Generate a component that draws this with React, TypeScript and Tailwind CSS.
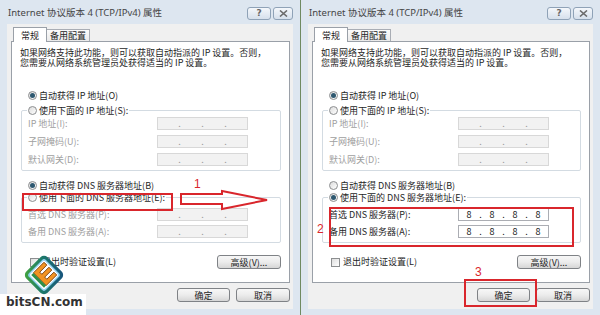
import React from 'react';

// 常规 tab of the IPv4 properties dialog, shown twice: before and after
const CJK = "font-['Noto_Sans_CJK_SC',sans-serif]";

const Radio = ({ checked }: { checked?: boolean }) => (
  <span className="w-[9px] h-[9px] rounded-full border border-[#8c8e90] bg-gradient-to-br from-[#dcdcdc] to-white flex items-center justify-center shrink-0">
    {checked && <span className="w-[5px] h-[5px] rounded-full bg-[#2e5870]" />}
  </span>
);

const IpBox = ({ value, disabled }: { value?: string[]; disabled?: boolean }) => (
  <div className={`w-[91px] h-[13px] border flex items-center text-[9px] leading-none ${disabled ? 'bg-[#f2f2f2] border-[#d8d8d8] text-[#9a9a9a]' : 'bg-white border-[#abadb3] text-[#222]'}`}>
    {[0, 1, 2, 3].map((i) => (
      <React.Fragment key={i}>
        <span className="flex-1 text-center">{value ? value[i] : ''}</span>
        {i < 3 && <span className="w-[3px] text-center">.</span>}
      </React.Fragment>
    ))}
  </div>
);

const FieldRow = ({ label, value, disabled }: { label: string; value?: string[]; disabled?: boolean }) => (
  <div className="flex items-center h-[13px]">
    <span className={`w-[135px] pl-[6px] text-[9px] leading-none ${disabled ? 'text-[#a0a0a0]' : 'text-[#1e1e1e]'}`}>{label}</span>
    <IpBox value={value} disabled={disabled} />
  </div>
);

const Btn = ({ children, w }: { children: React.ReactNode; w: string }) => (
  <div className={`${w} h-[14px] rounded-[3px] border border-[#7f8286] bg-gradient-to-b from-[#f7f7f7] via-[#ececec] to-[#d6d6d6] flex items-center justify-center text-[9px] leading-none text-[#1e1e1e]`}>
    {children}
  </div>
);

const Dialog = ({ after, width }: { after?: boolean; width: string }) => {
  const dns = after ? ['8', '8', '8', '8'] : undefined;
  return (
    <div className={`${width} h-[315px] bg-[#dde6f0] flex flex-col shrink-0 ${CJK}`}>
      {/* title bar */}
      <div className="h-[24px] flex items-start justify-between pl-[8px] pr-[7px]">
        <span className="mt-[8px] text-[9.5px] leading-none text-[#454545] font-['Noto_Sans','Noto_Sans_CJK_SC',sans-serif]">Internet 协议版本 4 (TCP/IPv4) 属性</span>
        <div className="mt-[7px] flex gap-[2px]">
          <div className="w-[24px] h-[13px] rounded-[3px] border border-[#8fa2b7] bg-gradient-to-b from-[#f4f7fb] to-[#d6e0ec] flex items-center justify-center text-[9px] leading-none font-bold text-[#666] font-['DejaVu_Sans',sans-serif]">?</div>
          <div className="w-[20px] h-[13px] rounded-[3px] border border-[#8fa2b7] bg-gradient-to-b from-[#f4f7fb] to-[#d6e0ec] flex items-center justify-center">
            <svg width="9" height="7" viewBox="0 0 9 7">
              <path d="M1 0.5 L8 6.5 M8 0.5 L1 6.5" stroke="#6b6b6b" strokeWidth="1.6" />
            </svg>
          </div>
        </div>
      </div>
      {/* client */}
      <div className="flex-1 mx-[7px] mb-[6px] bg-[#f0f0f0] flex flex-col pt-[3px] pl-[4px] pr-[3px]">
        <div className="h-[14px] flex items-end pl-[2px] text-[9px] leading-none">
          <div className="w-[34px] h-[15px] -mb-[1px] bg-white border border-b-0 border-[#9aa0a8] flex items-center justify-center text-[#1e1e1e] relative z-10">常规</div>
          <div className="w-[43px] h-[12px] bg-gradient-to-b from-[#fbfbfb] to-[#eaeaea] border border-b-0 border-l-0 border-[#a9adb4] flex items-center justify-center text-[#1e1e1e]">备用配置</div>
        </div>
        <div className="h-[242px] bg-white border border-[#9aa0a8] flex flex-col text-[9px] leading-[10px] text-[#1e1e1e]">
          <div className="pt-[6px] pl-[8px] flex flex-col">
            <div className="h-[10px]">如果网络支持此功能，则可以获取自动指派的 IP 设置。否则，</div>
            <div className="h-[10px]">您需要从网络系统管理员处获得适当的 IP 设置。</div>
          </div>
          <div className="mt-[22px] pl-[16px] h-[11px] flex items-center gap-[2px]">
            <Radio checked />
            <span>自动获得 IP 地址(O)</span>
          </div>
          <fieldset className="mt-[4px] ml-[9px] mr-[8px] border border-[#d3dbe2] rounded-[2px] pb-[4px]">
            <legend className="ml-[5px] px-[1px] h-[11px] flex items-center gap-[2px]">
              <Radio />
              <span>使用下面的 IP 地址(S):</span>
            </legend>
            <div className="pt-[1px] flex flex-col gap-[5px]">
              <FieldRow label="IP 地址(I):" disabled />
              <FieldRow label="子网掩码(U):" disabled />
              <FieldRow label="默认网关(D):" disabled />
            </div>
          </fieldset>
          <div className="mt-[9px] pl-[16px] h-[11px] flex items-center gap-[2px]">
            <Radio checked={!after} />
            <span>自动获得 DNS 服务器地址(B)</span>
          </div>
          <fieldset className="mt-[1px] ml-[9px] mr-[8px] border border-[#d3dbe2] rounded-[2px] pb-[4px]">
            <legend className="ml-[5px] px-[1px] h-[11px] flex items-center gap-[2px]">
              <Radio checked={after} />
              <span>使用下面的 DNS 服务器地址(E):</span>
            </legend>
            <div className="pt-[5px] flex flex-col gap-[4px]">
              <FieldRow label="首选 DNS 服务器(P):" value={dns} disabled={!after} />
              <FieldRow label="备用 DNS 服务器(A):" value={dns} disabled={!after} />
            </div>
          </fieldset>
          <div className="mt-[12px] pl-[18px] pr-[8px] h-[14px] flex items-center justify-between">
            <div className="flex items-center gap-[3px]">
              <span className="w-[9px] h-[9px] border border-[#8c8e90] bg-gradient-to-br from-[#dedede] to-white" />
              <span>退出时验证设置(L)</span>
            </div>
            <Btn w="w-[64px]">高级(V)...</Btn>
          </div>
        </div>
        <div className="mt-[5px] flex justify-end gap-[6px]">
          <Btn w="w-[53px]">确定</Btn>
          <Btn w="w-[54px]">取消</Btn>
        </div>
      </div>
    </div>
  );
};

const Logo = () => (
  <div className="absolute left-0 bottom-0 w-[86px] h-[62px]">
    <div className="absolute left-0 bottom-0 w-[86px] h-[21px] bg-white" />
    <svg className="absolute left-[19px] top-0" width="50" height="44" viewBox="0 0 50 44">
      <defs>
        <linearGradient id="rim" x1="0" y1="1" x2="1" y2="0">
          <stop offset="0" stopColor="#47a83a" />
          <stop offset="0.45" stopColor="#1d7a6a" />
          <stop offset="1" stopColor="#17507e" />
        </linearGradient>
      </defs>
      <g transform="rotate(45 25 22)">
        <rect x="10" y="7" width="30" height="30" rx="5" fill="url(#rim)" />
        <rect x="13" y="10" width="24" height="24" rx="3" fill="#8fd0f0" />
        <rect x="14.5" y="11.5" width="21" height="21" rx="2" fill="#fff" />
        <path d="M16 13 h4 v10 h3 v-10 h4 v10 h3 v-10 h4 v15 h-18 z" fill="#f29322" stroke="#6a3200" strokeWidth="0.8" />
        <rect x="16" y="28" width="18" height="3" fill="#2f8f4a" />
      </g>
    </svg>
    <span className="absolute left-[6px] bottom-[7px] text-[12px] leading-none font-bold text-[#333] font-['DejaVu_Sans',sans-serif]">bitsCN.com</span>
  </div>
);

export default function App() {
  return (
    <div className="relative w-[600px] h-[315px] flex bg-white overflow-hidden">
      <Dialog width="w-[300px]" />
      <div className="w-[1px] h-full bg-[#6f8a62] shrink-0" />
      <Dialog width="w-[299px]" after />

      {/* step 1 */}
      <div className="absolute left-[22px] top-[193px] w-[151px] h-[18px] border-2 border-[#d9262c]" />
      <span className="absolute left-[194px] top-[178px] text-[12px] leading-none text-[#d9262c] font-['Liberation_Sans',sans-serif]">1</span>
      <svg className="absolute left-[178px] top-[188px]" width="92" height="24" viewBox="0 0 92 24">
        <polygon points="3,6 44,6 44,3 89,12 44,21 44,16 3,16" fill="none" stroke="#d9262c" strokeWidth="2" strokeLinejoin="miter" />
      </svg>

      {/* step 2 */}
      <div className="absolute left-[329px] top-[207px] w-[245px] h-[40px] border-2 border-[#d9262c]" />
      <span className="absolute left-[317px] top-[223px] text-[12px] leading-none text-[#d9262c] font-['Liberation_Sans',sans-serif]">2</span>

      {/* step 3 */}
      <span className="absolute left-[475px] top-[266px] text-[12px] leading-none text-[#d9262c] font-['Liberation_Sans',sans-serif]">3</span>
      <div className="absolute left-[464px] top-[279px] w-[73px] h-[28px] border-2 border-[#d9262c]" />

      <Logo />
    </div>
  );
}
